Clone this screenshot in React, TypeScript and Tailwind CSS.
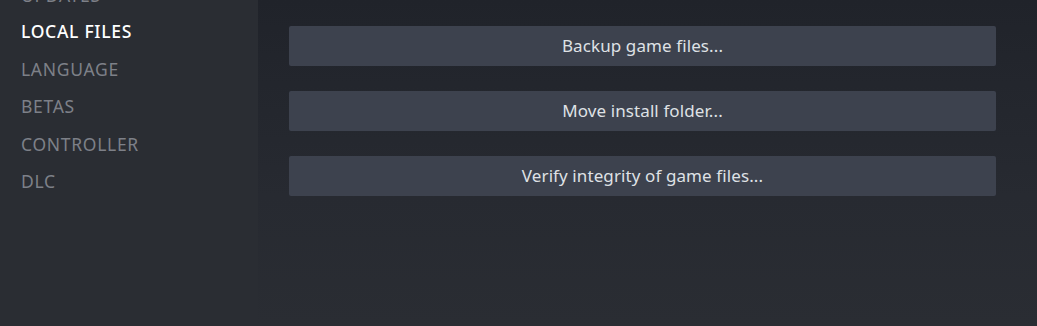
import React from 'react';

const navItems = ['LOCAL FILES', 'LANGUAGE', 'BETAS', 'CONTROLLER', 'DLC'];
const actions = ['Backup game files...', 'Move install folder...', 'Verify integrity of game files...'];

const App: React.FC = () => {
  return (
    <div
      className="w-[1037px] h-[326px] flex overflow-hidden bg-[#2a2d33]"
      style={{ fontFamily: '"Noto Sans", "Open Sans", sans-serif' }}
    >
      {/* Sidebar */}
      <aside className="w-[258px] shrink-0 bg-[#2a2d33] pl-[21px]">
        <ul className="flex flex-col">
          {/* partially scrolled-off item */}
          <li className="-mt-[22px] h-[35px] leading-[35px] text-[17.5px] tracking-[0.7px] text-[#7d8088]">
            UPDATES
          </li>
          {navItems.map((item) => (
            <li
              key={item}
              className={`h-[37.5px] leading-[37.5px] text-[17.5px] tracking-[0.7px] ${
                item === 'LOCAL FILES' ? 'text-white font-medium' : 'text-[#7d8088]'
              }`}
            >
              {item}
            </li>
          ))}
        </ul>
      </aside>

      {/* Content */}
      <main className="flex-1 bg-gradient-to-b from-[#20232a] via-[#272a31] via-60% to-[#2a2d33] pt-[26px] pl-[31px] pr-[41px]">
        <div className="flex flex-col gap-[25px]">
          {actions.map((label) => (
            <button
              key={label}
              className="h-[40px] w-full bg-[#3d424e] text-[#dfe1e5] text-[17px] tracking-[0.1px] rounded-[2px] flex items-center justify-center"
            >
              {label}
            </button>
          ))}
        </div>
      </main>
    </div>
  );
};

export default App;
